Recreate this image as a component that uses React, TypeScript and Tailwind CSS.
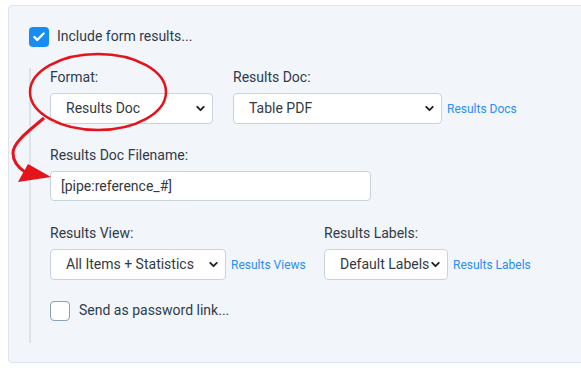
import { Check, ChevronDown } from "lucide-react";

const FakeSelect = ({ value, width, pl = "pl-[15px]" }: { value: string; width: string; pl?: string }) => {
  return (
    <div
      className={`${width} ${pl} h-[31px] flex items-center justify-between pr-[5px] bg-white border border-[#c8d3de] rounded-[4px] text-[14px] text-[#333a42]`}
    >
      <span className="whitespace-nowrap">{value}</span>
      <ChevronDown className="w-[13px] h-[13px] shrink-0 text-[#222]" strokeWidth={3.5} />
    </div>
  );
};

const Label = ({ children }: { children: string }) => (
  <div className="text-[14px] leading-[17px] text-[#2f3b4a] mb-[7px]">{children}</div>
);

const SideLink = ({ children }: { children: string }) => (
  <a className="ml-[5px] text-[12px] text-[#2b8ef1] whitespace-nowrap">{children}</a>
);

const App = () => {
  return (
    <div className="relative w-[581px] h-[368px] bg-white overflow-hidden font-['Roboto',sans-serif]">
      <div className="mt-[5px] ml-[8px] w-[600px] h-[358px] bg-[#f2f5fa] border border-[#dce3ea] rounded-[4px] pt-[20px] pl-[20px]">
        <div className="flex items-center gap-[8px]">
          <div className="w-[20px] h-[20px] rounded-[4px] bg-[#178cf2] flex items-center justify-center">
            <Check className="w-[14px] h-[14px] text-white" strokeWidth={4} />
          </div>
          <span className="text-[14px] text-[#2f3b4a]">Include form results...</span>
        </div>

        <div className="mt-[21px] border-l-2 border-[#dde3ea] pl-[19px] pt-[1px] h-[275px]">
          <div className="flex">
            <div className="w-[183px]">
              <Label>Format:</Label>
              <FakeSelect value="Results Doc" width="w-[163px]" />
            </div>
            <div>
              <Label>Results Doc:</Label>
              <div className="flex items-center">
                <FakeSelect value="Table PDF" width="w-[209px]" />
                <SideLink>Results Docs</SideLink>
              </div>
            </div>
          </div>

          <div className="mt-[23px]">
            <Label>Results Doc Filename:</Label>
            <div className="w-[321px] h-[30px] flex items-center pl-[10px] bg-white border border-[#c8d3de] rounded-[4px] text-[14px] text-[#333a42]">
              [pipe:reference_#]
            </div>
          </div>

          <div className="flex mt-[24px]">
            <div className="w-[274px]">
              <Label>Results View:</Label>
              <div className="flex items-center">
                <FakeSelect value="All Items + Statistics" width="w-[176px]" />
                <SideLink>Results Views</SideLink>
              </div>
            </div>
            <div>
              <Label>Results Labels:</Label>
              <div className="flex items-center">
                <FakeSelect value="Default Labels" width="w-[124px]" pl="pl-[15px]" />
                <SideLink>Results Labels</SideLink>
              </div>
            </div>
          </div>

          <div className="flex items-center gap-[9px] mt-[20px]">
            <div className="w-[20px] h-[20px] rounded-[4px] bg-white border border-[#8aa2b8]" />
            <span className="text-[14px] text-[#2f3b4a]">Send as password link...</span>
          </div>
        </div>
      </div>

      <svg className="absolute inset-0 pointer-events-none" width="581" height="368" viewBox="0 0 581 368">
        <ellipse cx="98" cy="92" rx="68" ry="38" fill="none" stroke="#e3141c" strokeWidth="2.5" />
        <path d="M44 118 C 30 130, 13 142, 13 153 C 13 162, 19 168, 25 172" fill="none" stroke="#e3141c" strokeWidth="3" />
        <polygon points="18,182 28,164 51,177" fill="#e3141c" />
      </svg>
    </div>
  );
};

export default App;
